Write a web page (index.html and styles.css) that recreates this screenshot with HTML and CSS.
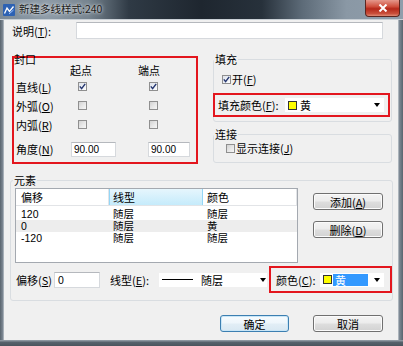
FILE: index.html
```html
<!DOCTYPE html>
<html lang="zh-CN">
<head>
<meta charset="utf-8">
<title>新建多线样式:240</title>
<link rel="stylesheet" href="styles.css">
</head>
<body>
<div class="window">
  <div class="titlebar">
    <span class="appicon"><svg width="12" height="12" viewBox="0 0 12 12"><rect x="0" y="0" width="12" height="12" rx="1" fill="#2d62b3"/><polyline points="1.5,9.5 4,4 6.5,7.5 10.5,2.5" fill="none" stroke="#fff" stroke-width="1.3"/><polyline points="6,10 10.5,6" fill="none" stroke="#9cc3ff" stroke-width="1"/></svg></span>
    <span class="title">新建多线样式:240</span>
    <span class="close"><svg width="10" height="8" viewBox="0 0 10 8"><path d="M1.5 0.5 L8.5 7.5 M8.5 0.5 L1.5 7.5" stroke="#fff" stroke-width="2"/></svg></span>
  </div>
  <div class="frame-row">
    <div class="frame-left"></div>
    <div class="client">
      <div class="desc-row">
        <span class="desc-label">说明(<u>T</u>):</span>
        <div class="field desc-field"></div>
      </div>

      <div class="middle">
        <div class="caps redbox">
          <div class="caps-title">封口</div>
          <div class="caps-grid">
            <span></span><span class="hdr h1">起点</span><span class="hdr h2">端点</span>
            <span class="c-lbl">直线(<u>L</u>)</span>
            <span class="cb checked c1"><svg width="7" height="7" viewBox="0 0 7 7"><path d="M0.8 3.4 L2.6 5.6 L6.2 0.8" fill="none" stroke="#24356f" stroke-width="1.4"/></svg></span>
            <span class="cb checked c2"><svg width="7" height="7" viewBox="0 0 7 7"><path d="M0.8 3.4 L2.6 5.6 L6.2 0.8" fill="none" stroke="#24356f" stroke-width="1.4"/></svg></span>
            <span class="c-lbl">外弧(<u>O</u>)</span>
            <span class="cb c1"></span>
            <span class="cb c2"></span>
            <span class="c-lbl">内弧(<u>R</u>)</span>
            <span class="cb c1"></span>
            <span class="cb c2"></span>
            <span class="c-lbl angle">角度(<u>N</u>)</span>
            <span class="field num n1">90.00</span>
            <span class="field num n2">90.00</span>
          </div>
        </div>

        <div class="right-col">
          <div class="group fill-group">
            <div class="grp-label">填充</div>
            <div class="check-row on-row">
              <span class="cb checked"><svg width="7" height="7" viewBox="0 0 7 7"><path d="M0.8 3.4 L2.6 5.6 L6.2 0.8" fill="none" stroke="#24356f" stroke-width="1.4"/></svg></span>
              <span class="cb-text">开(<u>F</u>)</span>
            </div>
            <div class="redbox fill-color">
              <span class="fc-label">填充颜色(<u>F</u>):</span>
              <div class="combo fc-combo">
                <span class="swatch"></span>
                <span class="combo-text">黄</span>
                <span class="arrow"></span>
              </div>
            </div>
          </div>
          <div class="group join-group">
            <div class="grp-label">连接</div>
            <div class="check-row join-row">
              <span class="cb"></span>
              <span class="cb-text">显示连接(<u>J</u>)</span>
            </div>
          </div>
        </div>
      </div>

      <div class="group elem-group">
        <div class="grp-label">元素</div>
        <div class="elem-top">
          <div class="listbox">
            <div class="lv-header">
              <span class="lv-h">偏移</span>
              <span class="lv-h hot">线型</span>
              <span class="lv-h">颜色</span>
            </div>
            <div class="lv-row"><span>120</span><span>随层</span><span>随层</span></div>
            <div class="lv-row sel"><span>0</span><span>随层</span><span>黄</span></div>
            <div class="lv-row"><span>-120</span><span>随层</span><span>随层</span></div>
          </div>
          <div class="side-btns">
            <div class="btn">添加(<u>A</u>)</div>
            <div class="btn">删除(<u>D</u>)</div>
          </div>
        </div>
        <div class="elem-bottom">
          <span class="eb-label off-label">偏移(<u>S</u>)</span>
          <div class="field off-field">0</div>
          <span class="eb-label lt-label">线型(<u>E</u>):</span>
          <div class="combo lt-combo">
            <span class="line-sample"></span>
            <span class="combo-text">随层</span>
            <span class="arrow"></span>
          </div>
          <div class="redbox color-box">
            <span class="eb-label col-label">颜色(<u>C</u>):</span>
            <div class="combo col-combo">
              <span class="swatch"></span>
              <span class="combo-text hl">黄</span>
              <span class="arrow"></span>
            </div>
          </div>
        </div>
      </div>

      <div class="dlg-btns">
        <div class="btn default">确定</div>
        <div class="btn">取消</div>
      </div>
    </div>
    <div class="frame-right"></div>
  </div>
  <div class="frame-bottom"></div>
</div>
</body>
</html>
```

FILE: styles.css
```css
* { box-sizing: border-box; }
html, body { margin: 0; padding: 0; }
body {
  width: 403px;
  height: 346px;
  overflow: hidden;
  font-family: "Noto Sans CJK SC", "Liberation Sans", sans-serif;
  font-size: 11px;
  color: #000;
  background: #5a6570;
}
u { text-decoration: underline; text-underline-offset: 1px; }

.window {
  width: 403px;
  height: 346px;
  display: flex;
  flex-direction: column;
}

.titlebar {
  height: 20px;
  display: flex;
  align-items: flex-start;
  background: linear-gradient(to right, #7c8b98 0%, #8e9ba7 12%, #76848f 22%, #2f3a45 32%, #1e262f 50%, #27313b 65%, #5d6b78 75%, #8a98a5 86%, #8f9dab 100%);
  border-bottom: 1px solid #c9d0d6;
}
.appicon {
  width: 12px;
  height: 12px;
  margin: 4px 0 0 3px;
  display: flex;
}
.title {
  margin: 2px 0 0 4px;
  font-size: 10.5px;
  line-height: 14px;
  color: #1a1a1a;
  text-shadow: 0 0 4px rgba(255,255,255,0.8), 0 0 2px rgba(255,255,255,0.6);
}
.close {
  margin-left: auto;
  margin-right: 3px;
  width: 35px;
  height: 17px;
  display: flex;
  align-items: center;
  justify-content: center;
  border: 1px solid #5b2620;
  border-top: none;
  border-radius: 0 0 4px 4px;
  background: linear-gradient(#e5988c 0%, #d0513f 40%, #b5281a 55%, #c94f3b 85%, #e08a75 100%);
}

.frame-row {
  display: flex;
  height: 320px;
}
.frame-left {
  width: 4px;
  background: linear-gradient(to right, #59646e, #7d8893 70%, #c3cad0);
}
.frame-right {
  width: 5px;
  background: linear-gradient(to right, #c3cad0, #7d8893 30%, #59646e);
}
.frame-bottom {
  height: 6px;
  background: linear-gradient(#9aa4ad, #56616b 40%, #4a545d);
}

.client {
  width: 394px;
  height: 320px;
  background: #f0f0f0;
  padding-top: 2px;
  display: flex;
  flex-direction: column;
  overflow: hidden;
}

.field {
  background: #fff;
  border: 1px solid #d6d9dd;
  border-top-color: #b5b8bd;
}

/* description row */
.desc-row {
  display: flex;
  align-items: center;
  height: 17px;
}
.desc-label {
  width: 72px;
  padding-left: 8px;
}
.desc-field {
  width: 307px;
  height: 17px;
}

/* middle area */
.middle {
  display: flex;
  margin-top: 17px;
  padding-left: 8px;
  height: 108px;
}
.redbox {
  border: 2px solid #e3161e;
}
.caps {
  width: 186px;
  height: 108px;
  display: flex;
  flex-direction: column;
}
.caps-title {
  margin-top: -4px;
  height: 8px;
  line-height: 10px;
}
.caps-grid {
  display: grid;
  grid-template-columns: 56px 68px 1fr;
  grid-template-rows: 15px 19px 19px 19px 27px;
  align-items: center;
}
.hdr { line-height: 12px; }
.c-lbl { padding-left: 2px; }
.cb {
  width: 9px;
  height: 9px;
  border: 1px solid #8f8f8f;
  background: linear-gradient(135deg, #d2d2d2 0%, #e6e6e6 50%, #f6f6f6 100%);
  display: flex;
  align-items: center;
  justify-content: center;
}
.cb.checked {
  background: linear-gradient(135deg, #dfe3ea 0%, #eef1f5 60%, #ffffff 100%);
}
.c1 { margin-left: 8px; }
.c2 { margin-left: 11px; }
.num {
  height: 15px;
  font-family: "Liberation Sans", sans-serif;
  font-size: 10px;
  line-height: 13px;
  padding-left: 2px;
  margin-top: 3px;
}
.angle { margin-top: 3px; }
.n1 { width: 45px; margin-left: 1px; }
.n2 { width: 42px; margin-left: 10px; }

/* right column */
.right-col {
  margin-left: 15px;
  width: 179px;
  display: flex;
  flex-direction: column;
}
.group {
  border: 1px solid #d9dde1;
  border-radius: 3px;
  display: flex;
  flex-direction: column;
}
.grp-label {
  align-self: flex-start;
  margin-top: -6px;
  padding: 0 1px;
  line-height: 10px;
  background: #f0f0f0;
}
.fill-group {
  margin-top: 3px;
  padding-bottom: 4px;
}
.check-row {
  display: flex;
  align-items: center;
  height: 10px;
}
.cb-text { margin-left: 1px; line-height: 10px; }
.on-row { margin-top: 10px; margin-left: 8px; }
.fill-color {
  margin-top: 9px;
  margin-left: -1px;
  width: 177px;
  height: 24px;
  display: flex;
  align-items: center;
  padding-left: 3px;
}
.fc-label { width: 67px; }
.combo {
  background: #fff;
  height: 14px;
  display: flex;
  align-items: center;
}
.fc-combo { width: 99px; padding-left: 3px; }
.swatch {
  width: 9px;
  height: 9px;
  background: #ffff00;
  border: 1px solid #333;
}
.combo-text { margin-left: 3px; line-height: 12px; }
.arrow {
  margin-left: auto;
  margin-right: 4px;
  width: 0;
  height: 0;
  border-left: 3px solid transparent;
  border-right: 3px solid transparent;
  border-top: 4px solid #000;
}
.join-group {
  margin-top: 12px;
  padding-bottom: 9px;
}
.join-row { margin-top: 4px; margin-left: 12px; }

/* elements group */
.elem-group {
  margin-top: 16px;
  margin-left: 6px;
  width: 383px;
  padding-bottom: 7px;
}
.elem-group > .grp-label { margin-left: 2px; }
.elem-top {
  display: flex;
  margin-top: 3px;
}
.listbox {
  margin-left: 4px;
  width: 283px;
  height: 75px;
  background: #fff;
  border: 1px solid #a4a9b0;
}
.lv-header {
  display: grid;
  grid-template-columns: 93px 94px 94px;
  height: 17px;
  border-bottom: 1px solid #e2e4e7;
  margin-bottom: 2px;
}
.lv-h {
  display: flex;
  align-items: center;
  padding-left: 4px;
  border-right: 1px solid #e2e4e7;
  line-height: 12px;
}
.lv-h:first-child { padding-left: 5px; }
.lv-h.hot {
  background: linear-gradient(#e6f6fd, #c5ebfb);
  border-left: 1px solid #94d6f6;
  border-right: 1px solid #94d6f6;
  padding-left: 3px;
}
.lv-row {
  display: grid;
  grid-template-columns: 93px 94px 94px;
  height: 12px;
  line-height: 12px;
  font-size: 10.5px;
}
.lv-row span { padding-left: 4px; }
.lv-row span:first-child { padding-left: 5px; font-family: "Liberation Sans", sans-serif; }
.lv-row.sel { background: #ededed; }
.side-btns {
  margin-left: 15px;
  padding-top: 5px;
  display: flex;
  flex-direction: column;
  gap: 11px;
}
.btn {
  width: 70px;
  height: 17px;
  border: 1px solid #707070;
  border-radius: 3px;
  background: linear-gradient(#f4f4f4 0%, #ececec 48%, #dedede 52%, #d2d2d2 100%);
  box-shadow: inset 0 0 0 1px #fbfbfb;
  display: flex;
  align-items: center;
  justify-content: center;
  line-height: 12px;
}
.btn.default {
  width: 69px;
  border-color: #3c7fb1;
  box-shadow: inset 0 0 0 1px #c9e6f7;
  background: linear-gradient(#f6fbfe 0%, #eef6fb 48%, #e2eef6 52%, #d8e8f2 100%);
}

.elem-bottom {
  display: flex;
  align-items: center;
  height: 27px;
  margin-top: 3px;
}
.off-label { width: 43px; padding-left: 5px; }
.off-field {
  width: 46px;
  height: 16px;
  padding-left: 3px;
  line-height: 14px;
  font-family: "Liberation Sans", sans-serif;
  font-size: 10.5px;
}
.lt-label { width: 49px; margin-left: 10px; }
.lt-combo { width: 108px; padding-left: 3px; }
.line-sample {
  width: 31px;
  height: 1px;
  background: #000;
}
.lt-combo .combo-text { margin-left: 8px; }
.lt-combo .arrow { margin-right: 1px; }
.color-box {
  margin-left: 2px;
  width: 123px;
  height: 27px;
  display: flex;
  align-items: center;
  padding-left: 5px;
}
.col-label { width: 44px; }
.col-combo { width: 64px; padding-left: 3px; }
.combo-text.hl {
  margin-left: 1px;
  width: 35px;
  background: #3399ff;
  color: #fff;
  padding-left: 2px;
  height: 12px;
}
.col-combo .arrow { margin-right: 4px; }

.dlg-btns {
  display: flex;
  justify-content: flex-end;
  gap: 24px;
  margin-top: 14px;
  padding-right: 15px;
}
```
